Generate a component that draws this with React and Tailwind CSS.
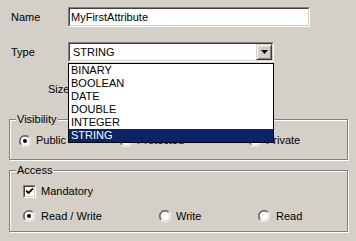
import React from 'react'

const types = ['BINARY', 'BOOLEAN', 'DATE', 'DOUBLE', 'INTEGER', 'STRING']

function Radio({ checked }) {
    return (
        <svg width="12" height="12" viewBox="0 0 12 12" className="shrink-0">
            <circle cx="6" cy="6" r="5" fill="#fff" />
            <path d="M1.76 10.24 A6 6 0 0 1 10.24 1.76" fill="none" stroke="#808080" strokeWidth="1" />
            <path d="M10.24 1.76 A6 6 0 0 1 1.76 10.24" fill="none" stroke="#fff" strokeWidth="1" />
            <path d="M2.46 9.54 A5 5 0 0 1 9.54 2.46" fill="none" stroke="#404040" strokeWidth="1" />
            <path d="M9.54 2.46 A5 5 0 0 1 2.46 9.54" fill="none" stroke="#d4d0c8" strokeWidth="1" />
            {checked && <circle cx="6" cy="6" r="2" fill="#000" />}
        </svg>
    )
}

function Checkbox({ checked }) {
    return (
        <div className="w-[13px] h-[13px] shrink-0 border border-t-[#808080] border-l-[#808080] border-b-white border-r-white">
            <div className="w-full h-full bg-white border border-t-[#404040] border-l-[#404040] border-b-[#d4d0c8] border-r-[#d4d0c8]">
                {checked && (
                    <svg width="9" height="9" viewBox="0 0 9 9">
                        <path d="M1 3.5 L3.5 6 L8 1.5" fill="none" stroke="#000" strokeWidth="1.8" />
                    </svg>
                )}
            </div>
        </div>
    )
}

function Sunken({ className, children }) {
    return (
        <div className={`border border-t-[#808080] border-l-[#808080] border-b-white border-r-white ${className}`}>
            <div className="w-full h-full bg-white border border-t-[#404040] border-l-[#404040] border-b-[#d4d0c8] border-r-[#d4d0c8] flex items-center">
                {children}
            </div>
        </div>
    )
}

function Group({ title, className, children }) {
    return (
        <div className={`relative ml-[9px] w-[339px] border border-[#808080] shadow-[inset_1px_1px_0_#fff,1px_1px_0_#fff] ${className}`}>
            <span className="absolute left-[6px] top-[-7px] px-[1px] bg-[#d4d0c8] leading-[13px]">{title}</span>
            {children}
        </div>
    )
}

export default function App() {
    return (
        <div className="relative w-[356px] h-[241px] overflow-hidden bg-[#d4d0c8] text-black text-[11px] leading-[13px] font-['Liberation_Sans',Arial,sans-serif]">
            {/* Name */}
            <div className="flex items-center h-[20px] mt-[7px]">
                <span className="ml-[11px] w-[57px]">Name</span>
                <Sunken className="w-[242px] h-[20px]">
                    <span className="pl-[1px]">MyFirstAttribute</span>
                </Sunken>
            </div>

            {/* Type */}
            <div className="flex items-center h-[20px] mt-[15px]">
                <span className="ml-[11px] w-[57px]">Type</span>
                <Sunken className="w-[206px] h-[20px]">
                    <span className="flex-1 pl-[3px]">STRING</span>
                    <div className="w-[16px] h-[16px] border border-t-[#d4d0c8] border-l-[#d4d0c8] border-b-[#404040] border-r-[#404040] bg-[#d4d0c8] shadow-[inset_1px_1px_0_#fff,inset_-1px_-1px_0_#808080] flex items-center justify-center">
                        <svg width="7" height="4" viewBox="0 0 7 4">
                            <path d="M0 0 H7 L3.5 4 Z" fill="#000" />
                        </svg>
                    </div>
                </Sunken>
            </div>

            {/* Size */}
            <div className="flex items-center h-[18px] mt-[18px]">
                <span className="ml-[48px]">Size</span>
            </div>

            {/* Visibility */}
            <Group title="Visibility" className="mt-[21px] h-[41px]">
                <div className="flex items-center h-full pt-[2px]">
                    <div className="flex items-center gap-[5px] w-[110px] pl-[9px]">
                        <Radio checked />
                        <span>Public</span>
                    </div>
                    <div className="flex items-center gap-[5px] w-[129px]">
                        <Radio />
                        <span>Protected</span>
                    </div>
                    <div className="flex items-center gap-[5px]">
                        <Radio />
                        <span>Private</span>
                    </div>
                </div>
            </Group>

            {/* Access */}
            <Group title="Access" className="mt-[10px] h-[62px]">
                <div className="flex items-center gap-[5px] h-[13px] mt-[14px] pl-[13px]">
                    <Checkbox checked />
                    <span>Mandatory</span>
                </div>
                <div className="flex items-center h-[12px] mt-[12px]">
                    <div className="flex items-center gap-[6px] w-[149px] pl-[13px]">
                        <Radio checked />
                        <span>Read / Write</span>
                    </div>
                    <div className="flex items-center gap-[5px] w-[99px]">
                        <Radio />
                        <span>Write</span>
                    </div>
                    <div className="flex items-center gap-[6px]">
                        <Radio />
                        <span>Read</span>
                    </div>
                </div>
            </Group>

            {/* Open type list */}
            <div className="absolute left-[68px] top-[63px] w-[206px] h-[80px] bg-white border border-black">
                {types.map((t) => (
                    <div
                        key={t}
                        className={`h-[13px] pl-[2px] leading-[13px] ${t === 'STRING' ? 'bg-[#0a246a] text-white' : ''}`}
                    >
                        {t}
                    </div>
                ))}
            </div>
        </div>
    )
}
